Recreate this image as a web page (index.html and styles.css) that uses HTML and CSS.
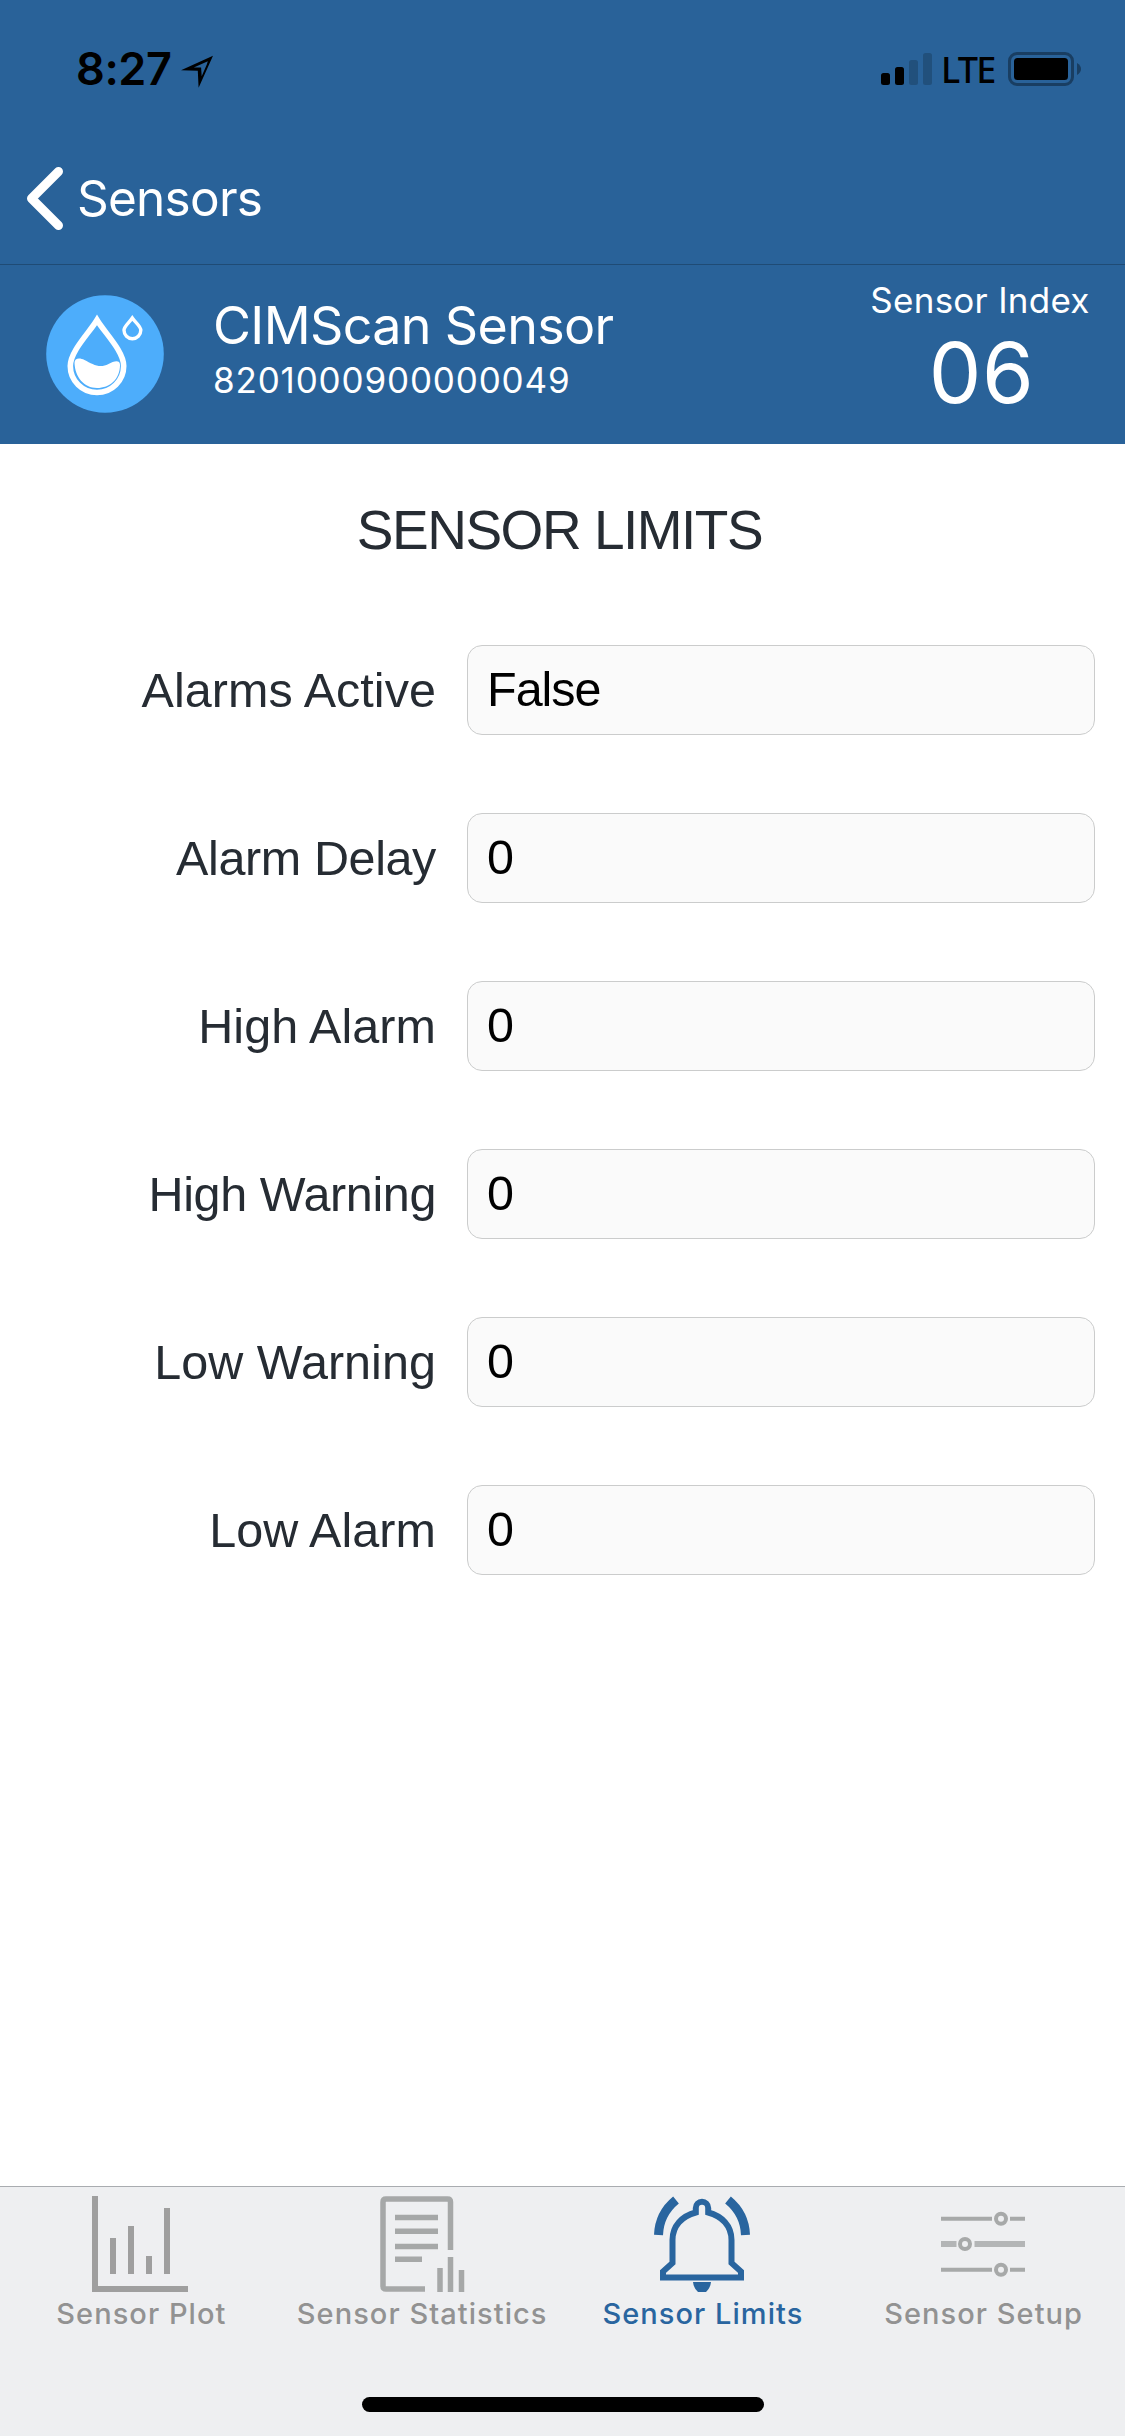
FILE: index.html
```html
<!DOCTYPE html>
<html lang="en">
<head>
<meta charset="utf-8">
<title>Sensor Limits</title>
<link rel="stylesheet" href="styles.css">
</head>
<body>
<div class="screen">
  <div class="status-bar">
    <span class="time">8:27</span>
    <svg class="location" width="32" height="33" viewBox="0 0 32 33"><path fill-rule="evenodd" d="M32 .7L0 15.3l16.8.4.8 17zM26.8 6.2l-.9 3-5.2 12-.6-8.6-7.3-.2z"/></svg>
    <svg class="signal" width="51" height="32" viewBox="0 0 51 32">
      <rect y="20" width="9" height="12" rx="2.5"/>
      <rect x="14" y="14" width="9" height="18" rx="2.5"/>
      <rect class="dim" x="28" y="7" width="9" height="25" rx="2.5"/>
      <rect class="dim" x="42" width="9" height="32" rx="2.5"/>
    </svg>
    <span class="network">LTE</span>
    <svg class="battery" width="73" height="34" viewBox="0 0 73 34">
      <rect class="shell" x="1.5" y="1.5" width="63" height="31" rx="7.5"/>
      <rect x="6" y="6" width="54" height="22" rx="3.5"/>
      <path class="cap" d="M69 11q4 2.5 4 6t-4 6z"/>
    </svg>
  </div>

  <nav class="nav-bar">
    <svg width="38" height="64" viewBox="0 0 38 64"><path d="M32.5 5.500L5.500 32.500l27 27"/></svg>
    <a class="back">Sensors</a>
  </nav>

  <header class="sensor">
    <svg class="badge" width="118" height="118" viewBox="0 0 118 118">
      <circle cx="59" cy="59" r="58.800"/>
      <path class="drop" d="M51 25C44 37 24.300 56 24.300 71a26.700 26.500 0 0 0 53.400 0C77.700 56 58 37 51 25z"/>
      <path class="liquid" d="M28.500 68c0-5 5-5.500 10-3 8 4 15 9 24 4 5-2.800 11.500-5 11.500 1C74 84 64 93 51 93S29 82 28.500 68z"/>
      <path class="droplet" d="M86.300 23C83 28 78 31 78 35.300a8.400 8.400 0 0 0 16.800 0c0-4.300-5.200-7.300-8.500-12.300z"/>
    </svg>
    <div class="sensor-text">
      <div class="sensor-name">CIMScan Sensor</div>
      <div class="sensor-serial">8201000900000049</div>
    </div>
    <div class="sensor-index">
      <div class="index-label">Sensor Index</div>
      <div class="index-value">06</div>
    </div>
  </header>

  <main class="limits">
    <h1 class="title">SENSOR LIMITS</h1>
    <div class="form">
      <div class="row"><span class="label">Alarms Active</span><span class="field">False</span></div>
      <div class="row"><span class="label tight">Alarm Delay</span><span class="field">0</span></div>
      <div class="row"><span class="label">High Alarm</span><span class="field">0</span></div>
      <div class="row"><span class="label tight">High Warning</span><span class="field">0</span></div>
      <div class="row"><span class="label">Low Warning</span><span class="field">0</span></div>
      <div class="row"><span class="label">Low Alarm</span><span class="field">0</span></div>
    </div>
  </main>

  <footer class="tab-bar">
    <div class="tabs">
      <a class="tab">
        <svg width="96" height="96" viewBox="0 0 96 96"><path fill="#9f9f9f" d="M0 0h6v90h90v6H0zM18 42h6v36h-6zM36 30h6v48h-6zM54 60h6v18h-6zM72 12h6v66h-6z"/></svg>
        <span>Sensor Plot</span>
      </a>
      <a class="tab">
        <svg width="96" height="96" viewBox="0 0 96 96" fill="none" stroke="#a6a8a8" stroke-width="5.500">
          <path d="M77.500 54V6q0-3-3-3H13q-3 0-3 3v84q0 3 3 3h39"/>
          <path d="M22 21.500h43M22 35.300h43M22 50.500h43M22 63.300h27"/>
          <path d="M67 72v24M77.500 61v35M88.500 74v22"/>
        </svg>
        <span>Sensor Statistics</span>
      </a>
      <a class="tab active">
        <svg width="96" height="96" viewBox="0 0 96 96" fill="none" stroke="#29659f" stroke-width="6">
          <path d="M9 81.500V75.500L18.500 67V44C18.500 30 28 20 41.800 16.500V12a6.200 6.200 0 0 1 12.400 0v4.500C68 20 77.500 30 77.500 44v23L87 75.500v6z"/>
          <path stroke-width="9" d="M4.500 39C5 25 11 13 22 4M91.500 39C91 25 85 13 74 4"/>
          <path fill="#29659f" stroke="none" d="M39 86h18q-.5 6-5 10h-8q-4.500-4-5-10z"/>
        </svg>
        <span>Sensor Limits</span>
      </a>
      <a class="tab">
        <svg width="96" height="96" viewBox="0 0 96 96" fill="none" stroke="#a7a9a9" stroke-width="4">
          <path d="M6 22.700h51M75 22.700h15M6 73.700h51M75 73.700h15"/>
          <path stroke="#b3b5b6" stroke-width="6" d="M6 48h15.500M39.500 48H90"/>
          <circle cx="66" cy="22.700" r="5"/>
          <circle cx="30" cy="48" r="5"/>
          <circle cx="66" cy="73.700" r="5"/>
        </svg>
        <span>Sensor Setup</span>
      </a>
    </div>
    <div class="home-indicator"></div>
  </footer>
</div>
</body>
</html>
```
FILE: styles.css
```css
* { box-sizing: border-box; }

body {
  margin: 0;
  background: #fff;
  font-family: Inter, "Liberation Sans", sans-serif;
}

svg { display: block; flex: none; }

.screen {
  width: 1125px;
  height: 2436px;
  display: flex;
  flex-direction: column;
}

.status-bar {
  height: 132px;
  padding: 24px 44px 18px 76px;
  display: flex;
  align-items: center;
  background: #296299;
  color: #000;
  line-height: 90px;
}

.time { font-size: 45px; font-weight: 600; letter-spacing: -0.4px; }
.location { margin: 5px auto 0 9px; }
.signal .dim { fill: #21507c; }
.network {
  width: 67px;
  margin-left: 9px;
  padding-top: 2px;
  font-family: "Noto Sans", sans-serif;
  font-size: 36px;
  font-weight: 500;
  letter-spacing: -1.8px;
}
.battery .shell { fill: none; stroke: #193e62; stroke-width: 3; }
.battery .cap { fill: #193e62; }

.nav-bar {
  height: 133px;
  padding-left: 26px;
  display: flex;
  align-items: center;
  gap: 13px;
  background: #296299;
  border-bottom: 1px solid #1f4b75;
}
.nav-bar path {
  fill: none;
  stroke: #fff;
  stroke-width: 9;
  stroke-linecap: round;
  stroke-linejoin: round;
}
.back { color: #fff; font-size: 49.5px; line-height: 60px; letter-spacing: -0.75px; }

.sensor {
  height: 179px;
  padding: 15px 25px 0 46px;
  display: flex;
  background: #296299;
  color: #fff;
}
.badge { margin-top: 15px; }
.badge circle { fill: #4dadfb; }
.badge .drop { fill: none; stroke: #fff; stroke-width: 5.6; }
.badge .liquid { fill: #fff; }
.badge .droplet { fill: none; stroke: #fff; stroke-width: 3.4; }
.sensor-text { margin: 15px auto 0 49px; }
.sensor-name { font-size: 52px; line-height: 62px; letter-spacing: -0.66px; }
.sensor-serial { font-size: 35px; line-height: 46px; letter-spacing: 0.84px; }
.sensor-index { width: 240px; text-align: center; }
.index-label { font-size: 35px; line-height: 40px; letter-spacing: 0.26px; }
.index-value {
  padding-left: 3px;
  font-size: 83.5px;
  line-height: 106px;
  letter-spacing: 0.5px;
}

.limits {
  flex: 1;
  padding-top: 56px;
  font-family: "Liberation Sans", Arial, sans-serif;
  color: #262c33;
}
.title {
  margin: 0 0 85px;
  padding-right: 6px;
  font-size: 55px;
  font-weight: 400;
  line-height: 60px;
  letter-spacing: -1.5px;
  text-align: center;
}
.form { display: flex; flex-direction: column; gap: 78px; }
.row { height: 90px; display: flex; gap: 31px; font-size: 48.5px; }
.label {
  width: 436px;
  line-height: 91px;
  letter-spacing: 0.05px;
  text-align: right;
}
.label.tight { letter-spacing: -0.38px; }
.field {
  width: 628px;
  height: 90px;
  padding-left: 19px;
  border: 1px solid #cbcccc;
  border-radius: 15px;
  background: #fafafa;
  color: #000;
  line-height: 87px;
  letter-spacing: -1px;
}

.tab-bar {
  height: 250px;
  padding: 9px 2px 0 0;
  background: #eeeff1;
  border-top: 1px solid #a9acb0;
}
.tabs { display: flex; }
.tab {
  flex: 1;
  display: flex;
  flex-direction: column;
  align-items: center;
  gap: 4px;
  color: #929292;
  font-size: 29px;
  font-weight: 500;
  line-height: 36px;
  letter-spacing: 1.05px;
  white-space: nowrap;
}
.tab span { padding-left: 2px; }
.tab.active { color: #29659f; }
.home-indicator {
  width: 402px;
  height: 15px;
  margin: 65px 0 0 362px;
  border-radius: 8px;
  background: #000;
}
```
